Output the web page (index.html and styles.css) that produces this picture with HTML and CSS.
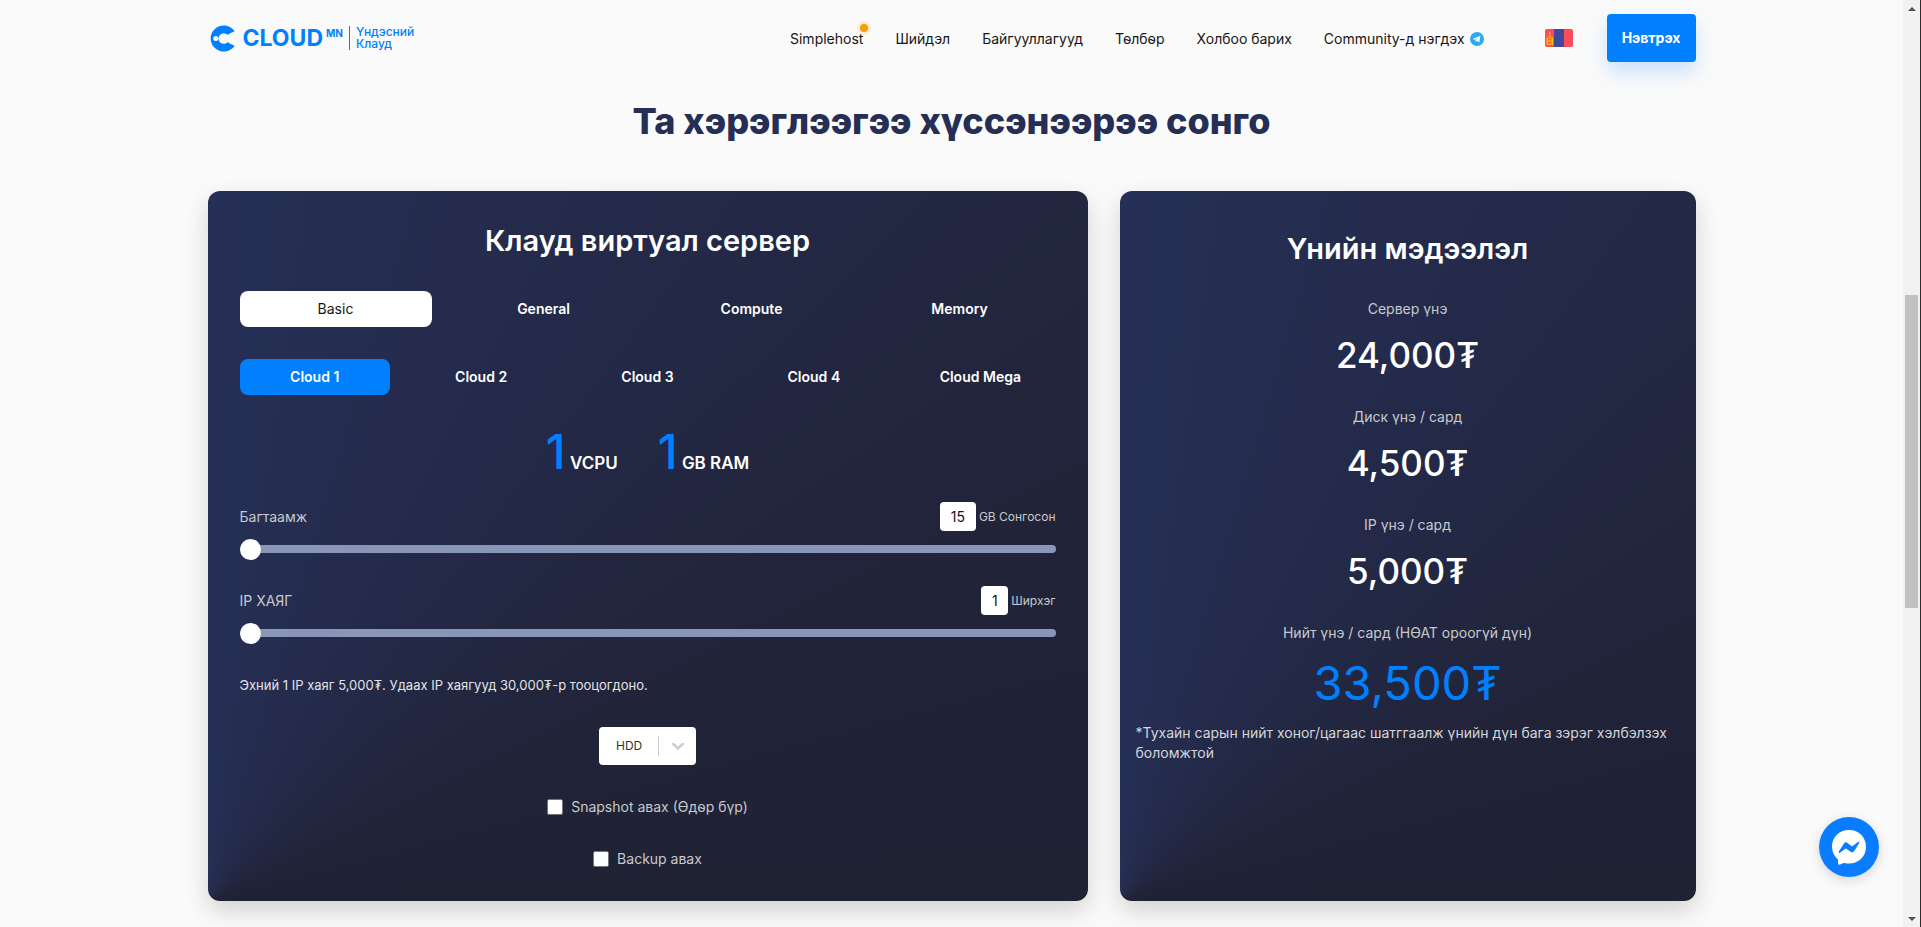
FILE: index.html
```html
<!DOCTYPE html>
<html lang="mn">
<head>
<meta charset="utf-8">
<title>Cloud.mn</title>
<link rel="stylesheet" href="styles.css">
</head>
<body>
<div class="viewport">
  <div class="page">
    <header class="header">
      <a class="logo" href="#" aria-label="Cloud.mn">
        <svg class="logo-mark" viewBox="0 0 26 27" aria-hidden="true">
          <path fill="#0080ff" d="M24.700 6.300A13.100 13.100 0 1 0 24.700 20.700L19.600 18.500V8.500Z"/>
          <circle cx="13.800" cy="13.500" r="5.300" fill="#fafafa"/>
          <path d="M16 10.500 20.500 8.500V18.500L16 16.500Z" fill="#fafafa"/>
          <circle cx="5.800" cy="13.500" r="2.500" fill="#fafafa"/>
          <path d="M6 13.500H10" stroke="#fafafa" stroke-width="1"/>
        </svg>
        <span class="logo-word">CLOUD</span>
        <span class="logo-mn">MN</span>
        <span class="logo-tag">Үндэсний<br>Клауд</span>
      </a>
      <nav class="nav">
        <a class="dotted" href="#">Simplehost<span class="dot"></span></a>
        <a href="#">Шийдэл</a>
        <a href="#">Байгууллагууд</a>
        <a href="#">Төлбөр</a>
        <a href="#">Холбоо барих</a>
        <a class="community" href="#">Community-д нэгдэх
          <svg viewBox="0 0 14 14" width="14" height="14" aria-hidden="true"><circle cx="7" cy="7" r="7" fill="#2aabee"/><path fill="#fff" d="M2.600 7 10.400 3.700 9.300 10.500 6.800 8.700 5.600 9.900 5.400 7.900 8.500 5.300 4.700 7.700Z"/></svg>
        </a>
      </nav>
      <button class="flag" type="button" aria-label="Монгол">
        <svg viewBox="0 0 28 18" width="28" height="18" aria-hidden="true">
          <rect width="28" height="18" rx="2" fill="#ff4b55"/><rect x="9" width="10" height="18" fill="#41479b"/>
          <path fill="#ffc800" d="M1.500 8.500h1.500v7.500H1.500zM6.500 8.500H8V16H6.500zM3.500 14.500H6V16H3.500zM3.500 8.500H6V9.800H3.500zM4.700 2.200 5.700 4.500 4.700 6 3.700 4.500zM3.300 6.500H6.200V7.700H3.300z"/>
          <circle cx="4.750" cy="12" r="1.600" fill="#ffa000"/>
        </svg>
      </button>
      <button class="login" type="button">Нэвтрэх</button>
    </header>

    <main class="main">
      <h1 class="headline">Та хэрэглээгээ хүссэнээрээ сонго</h1>
      <div class="cards">
        <section class="card config">
          <h2 class="card-title">Клауд виртуал сервер</h2>
          <div class="tabs types">
            <button class="tab picked-type" type="button">Basic</button>
            <button class="tab" type="button">General</button>
            <button class="tab" type="button">Compute</button>
            <button class="tab" type="button">Memory</button>
          </div>
          <div class="tabs sizes">
            <button class="tab picked-size" type="button">Cloud 1</button>
            <button class="tab" type="button">Cloud 2</button>
            <button class="tab" type="button">Cloud 3</button>
            <button class="tab" type="button">Cloud 4</button>
            <button class="tab" type="button">Cloud Mega</button>
          </div>
          <div class="specs">
            <p class="spec"><strong>1</strong> VCPU</p>
            <p class="spec"><strong>1</strong> GB RAM</p>
          </div>
          <div class="fields">
            <div class="field">
              <div class="field-head">
                <label for="disk">Багтаамж</label>
                <span class="amount"><input class="num wide" type="text" value="15" aria-label="GB"><span>GB Сонгосон</span></span>
              </div>
              <input class="slider" id="disk" type="range" min="15" max="1000" value="15">
            </div>
            <div class="field">
              <div class="field-head">
                <label for="ip">IP ХАЯГ</label>
                <span class="amount"><input class="num" type="text" value="1" aria-label="Ширхэг"><span>Ширхэг</span></span>
              </div>
              <input class="slider" id="ip" type="range" min="1" max="20" value="1">
            </div>
          </div>
          <p class="hint">Эхний 1 IP хаяг 5,000₮. Удаах IP хаягууд 30,000₮-р тооцогдоно.</p>
          <div class="picker">
            <select aria-label="Диск"><option>HDD</option></select>
            <span class="picker-end"><svg viewBox="0 0 20 20" width="16" height="16" aria-hidden="true"><path d="M4 7.500 10 13 16 7.500" fill="none" stroke="#ccc" stroke-width="3" stroke-linecap="round"/></svg></span>
          </div>
          <label class="check"><input type="checkbox">Snapshot авах (Өдөр бүр)</label>
          <label class="check"><input type="checkbox">Backup авах</label>
        </section>

        <section class="card prices">
          <h2 class="card-title">Үнийн мэдээлэл</h2>
          <div class="price"><p>Сервер үнэ</p><strong>24,000₮</strong></div>
          <div class="price"><p>Диск үнэ / сард</p><strong>4,500₮</strong></div>
          <div class="price"><p>IP үнэ / сард</p><strong>5,000₮</strong></div>
          <div class="price total"><p>Нийт үнэ / сард (НӨАТ ороогүй дүн)</p><strong>33,500₮</strong></div>
          <p class="note">*Тухайн сарын нийт хоног/цагаас шатггаалж үнийн дүн бага зэрэг хэлбэлзэх боломжтой</p>
        </section>
      </div>
    </main>

    <button class="chat" type="button" aria-label="Messenger">
      <svg viewBox="0 0 60 60" width="60" height="60" aria-hidden="true">
        <circle cx="30" cy="30" r="30" fill="#0a7cff"/>
        <path fill="#fff" d="M30 13C20 13 13 20.300 13 29.700c0 5 2 9.100 5.500 12.200.4.400.5.800.5 1.300l.1 3.200c0 1.100 1.100 1.600 1.900 1.200l3.500-1.500c.3-.1.700-.2 1-.1 1.400.4 2.900.6 4.500.6 10 0 17-7.300 17-16.800S40 13 30 13Z"/>
        <path fill="#0a7cff" d="M19.800 34.600l5-7.900a2.600 2.600 0 0 1 3.700-.7l4 3a1 1 0 0 0 1.200 0l5.300-4.100c.8-.5 1.700.3 1.200 1.200l-5 7.900a2.600 2.600 0 0 1-3.700.7l-4-3a1 1 0 0 0-1.200 0L21 35.800c-.8.500-1.700-.3-1.200-1.200Z"/>
      </svg>
    </button>
  </div>
  <div class="scrollbar" aria-hidden="true">
    <span class="arrow up"></span>
    <span class="thumb"></span>
    <span class="arrow down"></span>
  </div>
</div>
</body>
</html>
```
FILE: styles.css
```css
* { box-sizing: border-box; margin: 0; padding: 0; }
html, body { height: 100%; }
body { background: #fafafa; color: #161616; font: 14px/20px Inter, "Noto Sans", sans-serif; overflow: hidden; }
button, input, select { font: inherit; color: inherit; border: 0; background: none; }
button { cursor: pointer; }
a { color: inherit; text-decoration: none; }

.viewport { display: grid; grid-template-columns: 1fr 18px; height: 100vh; }
.page { position: relative; overflow: hidden; }

.header { display: flex; align-items: center; max-width: 1536px; height: 76px; margin: 0 auto; padding: 0 24px; }
.logo { display: flex; align-items: center; color: #0080ff; margin-right: auto; }
.logo-mark { width: 26px; height: 27px; margin: 0 7px 0 2px; }
.logo-word { font-size: 23px; line-height: 28px; font-weight: 700; }
.logo-mn { font-size: 10px; line-height: 12px; font-weight: 700; align-self: flex-start; margin: 3px 6px 0 3px; }
.logo-tag { border-left: 1px solid #0080ff; padding-left: 6px; font-size: 12px; line-height: 12px; font-weight: 500; }

.nav { display: flex; gap: 32px; margin-right: 61px; padding-top: 2px; }
.dotted { position: relative; }
.dot { position: absolute; right: -8px; top: -8px; width: 14px; height: 14px; border-radius: 50%; background: #f59e0b; border: 3px solid #fcecd0; }
.community { display: flex; align-items: center; gap: 5px; }
.flag { display: flex; margin-right: 34px; }
.login { height: 48px; padding: 0 15px; border-radius: 4px; background: #0080ff; color: #fff; font-weight: 700; box-shadow: 0 10px 20px rgba(0, 128, 255, .2); }

.main { max-width: 1536px; margin: 0 auto; padding: 23px 24px 0; }
.headline { color: #252e54; font-size: 36px; line-height: 44px; font-weight: 800; text-align: center; }

.cards { display: grid; grid-template-columns: repeat(5, 1fr); gap: 32px; margin-top: 48px; }
.card { border-radius: 12px; color: #fff; background: conic-gradient(from 0deg at 0 100%, #262f56 0deg, #232947 35deg, #212439 65deg, #1f2233 90deg); box-shadow: 0 10px 24px rgba(0, 0, 0, .16); }
.config { grid-column: span 3; padding: 32px; }
.prices { grid-column: span 2; padding: 40px 16px; text-align: center; }
.card-title { font-size: 29px; line-height: 36px; font-weight: 600; text-align: center; }

.tabs { display: grid; gap: 16px; margin-top: 32px; }
.types { grid-template-columns: repeat(4, 1fr); }
.sizes { grid-template-columns: repeat(5, 1fr); }
.tab { height: 36px; border-radius: 8px; font-weight: 600; }
.picked-type { background: #fff; color: #161616; font-weight: 400; }
.picked-size { background: #0080ff; }

.specs { display: flex; justify-content: center; gap: 40px; margin-top: 33px; }
.spec { font-size: 17px; line-height: 48px; font-weight: 600; }
.spec strong { font-size: 48px; font-weight: 500; color: #0080ff; }

.fields { display: grid; gap: 33px; margin-top: 15px; }
.field { color: #c8c9cd; }
.field-head { display: flex; align-items: center; justify-content: space-between; }
.amount { display: flex; align-items: center; gap: 3px; font-size: 12px; }
.num { width: 27px; height: 29px; border-radius: 4px; background: #fff; color: #161616; font-size: 14px; text-align: center; }
.wide { width: 36px; }
.slider { display: block; appearance: none; width: 100%; height: 8px; margin-top: 14px; border-radius: 4px; background: #8a96b8; }
.slider::-webkit-slider-thumb { appearance: none; width: 21px; height: 21px; border-radius: 50%; background: #fff; }
.hint { margin-top: 38px; color: #e2e3e6; font-size: 13px; }

.picker { position: relative; width: 97px; margin: 32px auto 0; }
.picker select { display: block; appearance: none; width: 100%; height: 38px; padding: 0 40px 0 17px; border-radius: 4px; background: #fff; color: #333; font-size: 12px; }
.picker-end { position: absolute; right: 0; top: 9px; display: flex; align-items: center; justify-content: center; width: 38px; height: 20px; border-left: 1px solid #ccc; pointer-events: none; }
.check { display: flex; align-items: center; justify-content: center; gap: 8px; margin-top: 32px; color: #c8c9cd; }
.check input { appearance: none; width: 16px; height: 16px; border: 1px solid #767676; border-radius: 2px; background: #fff; }

.price { margin-top: 32px; }
.price p { color: #c8c9cd; }
.price strong { display: block; margin-top: 16px; font-size: 35px; line-height: 40px; font-weight: 500; }
.total strong { font-size: 47px; line-height: 48px; font-weight: 400; }
.total strong { color: #0080ff; }
.note { margin-top: 16px; color: #d4d5d9; text-align: left; }

.chat { position: absolute; right: 24px; bottom: 50px; width: 60px; height: 60px; border-radius: 50%; box-shadow: 0 3px 12px rgba(0, 0, 0, .15); }
.chat svg { display: block; }

.scrollbar { display: grid; grid-template-rows: 17px 1fr 17px; justify-items: center; background: #f1f1f1; border-right: 1px solid #2b2b2b; }
.thumb { width: 13px; height: 35%; margin-top: 278px; background: #c1c1c1; }
.arrow { align-self: center; border: 4px solid transparent; }
.up { border-top: 0; border-bottom-color: #505050; }
.down { border-bottom: 0; border-top-color: #505050; }
```
